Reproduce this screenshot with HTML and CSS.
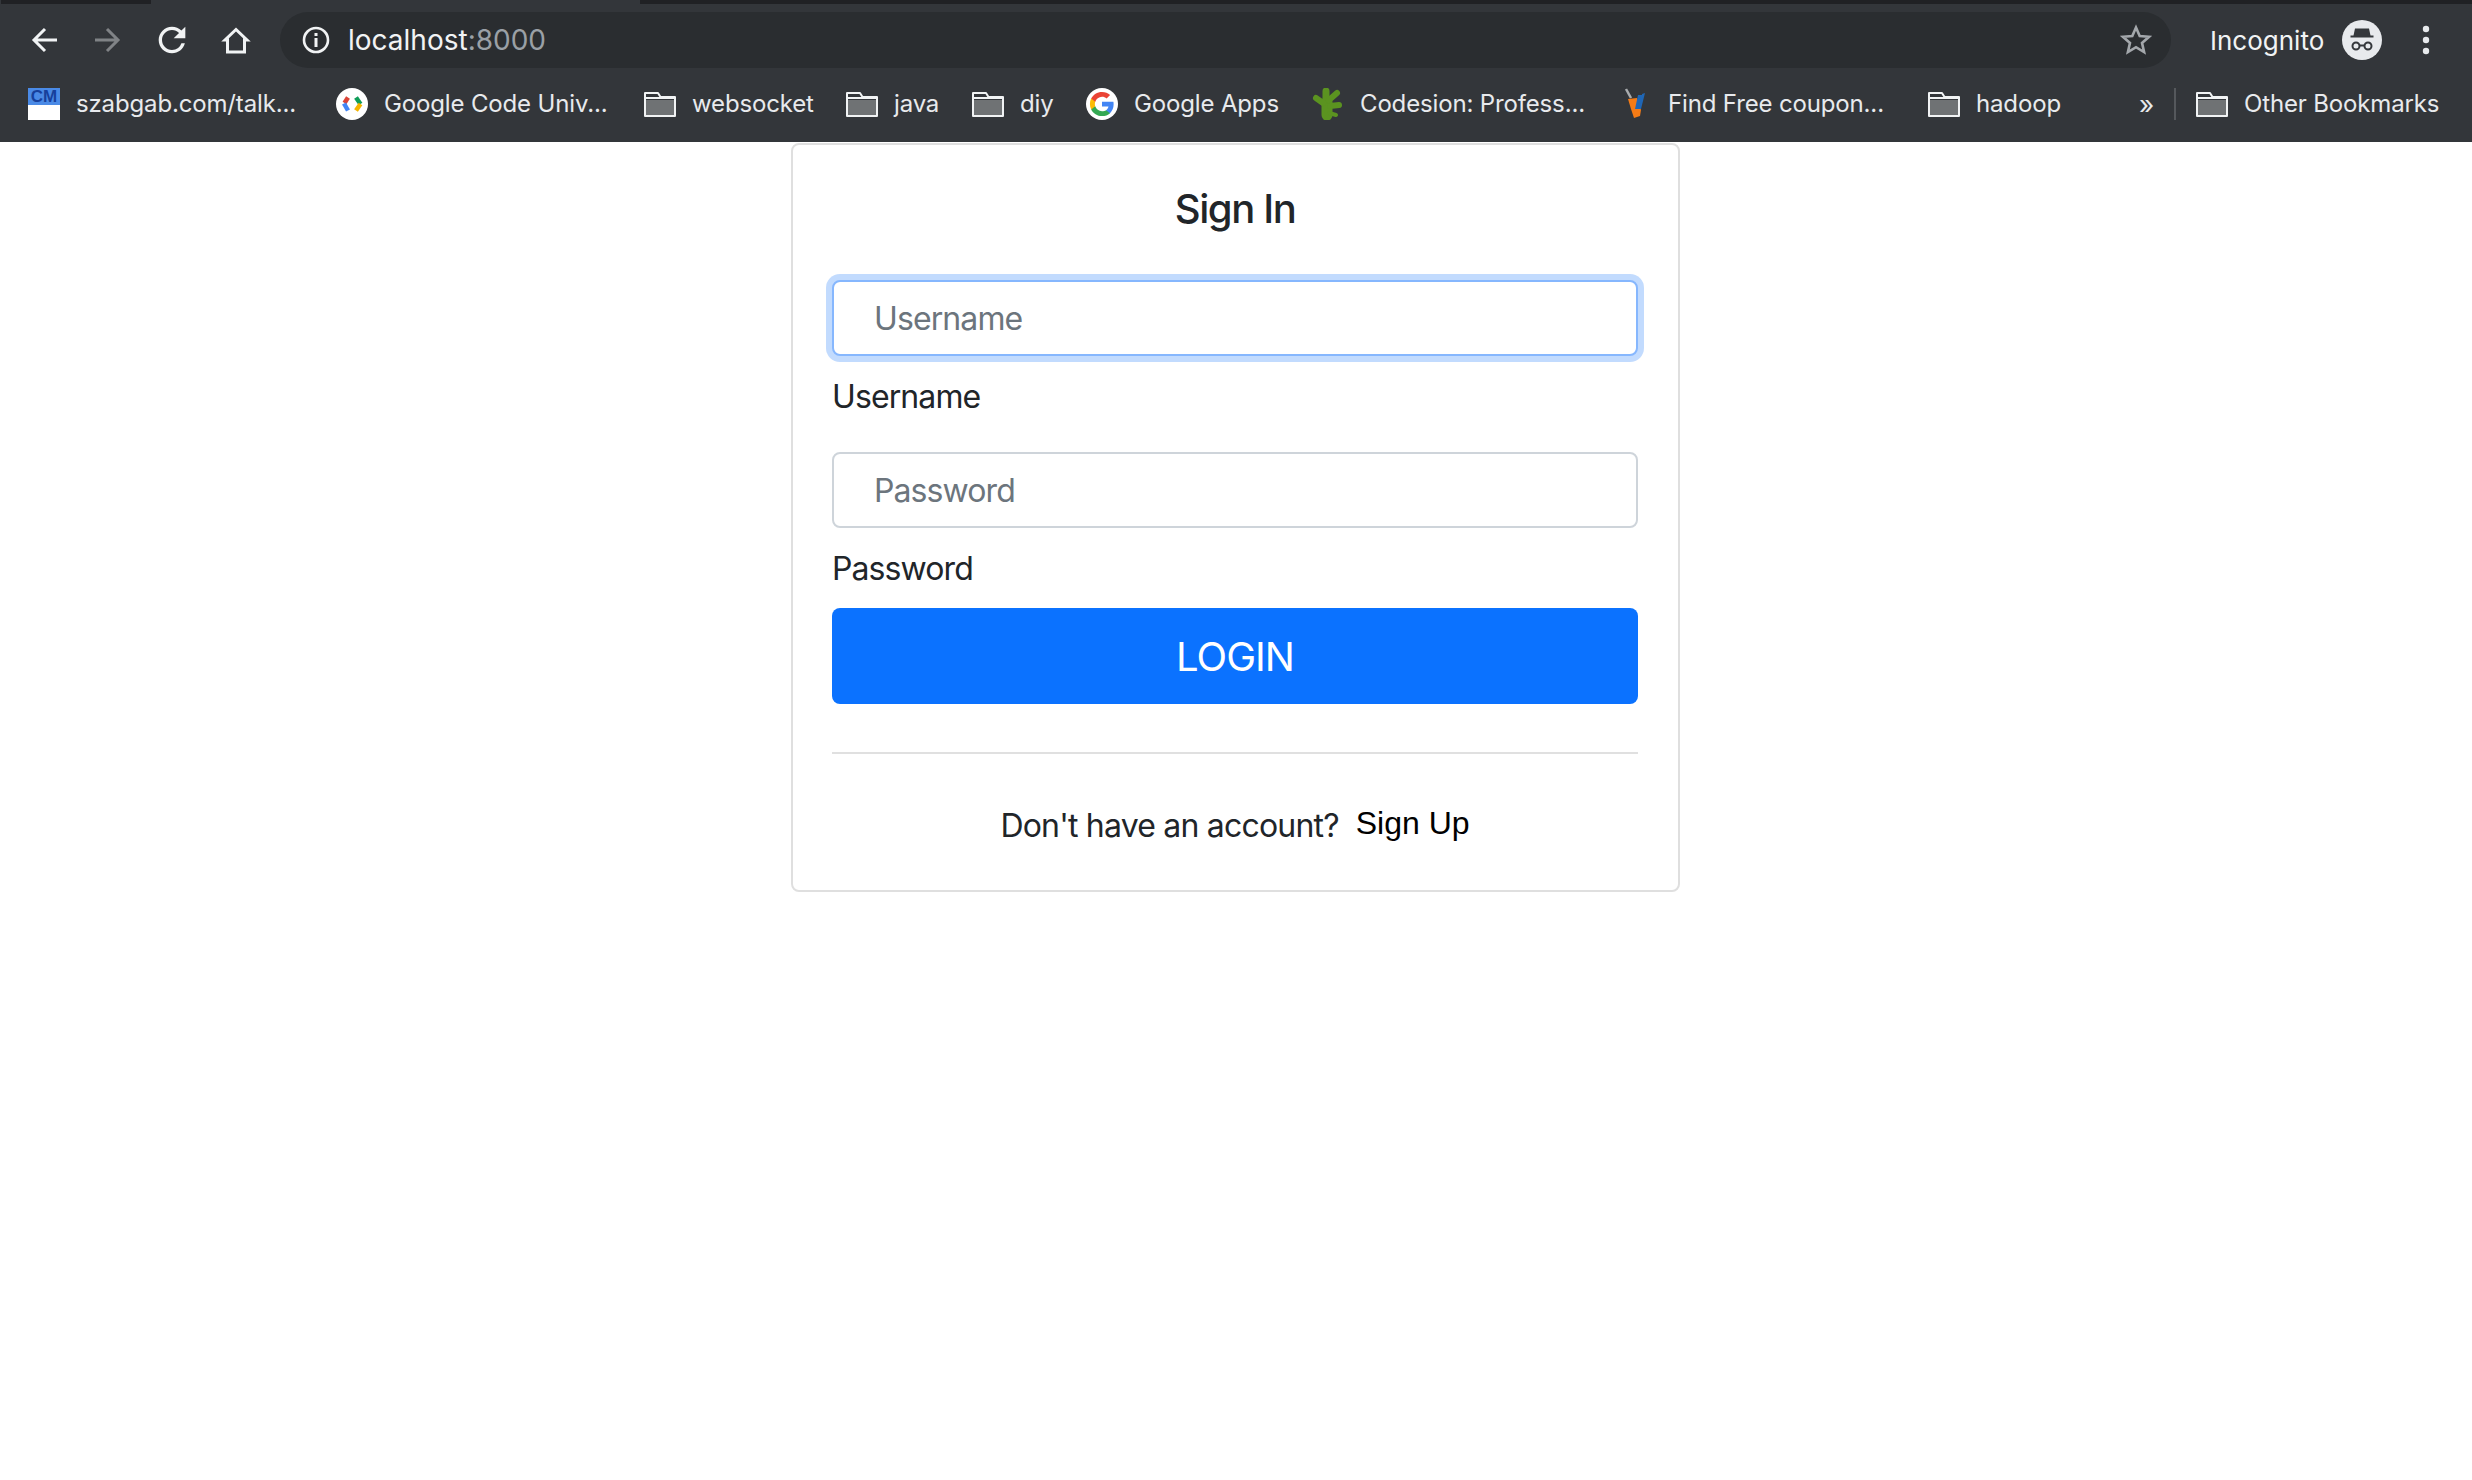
FILE: index.html
```html
<!DOCTYPE html>
<html lang="en">
<head>
    <meta charset="UTF-8">
    <meta name="viewport" content="width=device-width, initial-scale=1.0">
    <title>Sign In</title>
    <link rel="stylesheet" href="styles.css">
</head>
<body>

    <svg class="defs" width="0" height="0">
        <symbol id="folder" viewBox="0 0 32 26">
            <path d="M2 9h28v15H2z" fill="#6f7274"/>
            <path d="M1 24V2h13l2.500 4H31v19H1zM1 7h30" fill="none" stroke="#f1f3f4" stroke-width="2" stroke-linejoin="round"/>
        </symbol>
    </svg>

    <!--barra del navegador-->
    <header class="chrome">
        <div class="tabstrip">
            <span class="tab-dark tab-left"></span>
            <span class="tab-gap"></span>
            <span class="tab-dark tab-right"></span>
        </div>

        <div class="toolbar">
            <span class="navbtn">
                <svg width="32" height="32" viewBox="0 0 32 32" fill="none" stroke="#f1f3f4" stroke-width="3"><path d="M29 16H6M17 5L6 16l11 11"/></svg>
            </span>
            <span class="navbtn">
                <svg width="32" height="32" viewBox="0 0 32 32" fill="none" stroke="#808386" stroke-width="3"><path d="M3 16h23M15 5l11 11-11 11"/></svg>
            </span>
            <span class="navbtn">
                <svg width="40" height="40" viewBox="0 0 24 24" fill="#f1f3f4"><path d="M17.650 6.350A7.958 7.958 0 0012 4c-4.420 0-7.990 3.580-7.990 8s3.570 8 7.990 8c3.730 0 6.840-2.550 7.730-6h-2.080A5.990 5.990 0 0112 18c-3.310 0-6-2.690-6-6s2.690-6 6-6c1.660 0 3.140.690 4.220 1.780L13 11h7V4l-2.350 2.350z"/></svg>
            </span>
            <span class="navbtn">
                <svg width="32" height="32" viewBox="0 0 32 32" fill="none" stroke="#f1f3f4" stroke-width="3"><path d="M16 5.500L5 16h2.500v12h17V16H27z"/></svg>
            </span>

            <div class="omnibox">
                <svg class="info" width="30" height="30" viewBox="0 0 30 30">
                    <circle cx="15" cy="15" r="12" fill="none" stroke="#f1f3f4" stroke-width="2.600"/>
                    <path d="M13.500 13h3v9h-3zM13.500 8h3v3h-3z" fill="#f1f3f4"/>
                </svg>
                <span class="url">localhost<span class="port">:8000</span></span>
                <svg class="star" width="32" height="32" viewBox="0 0 32 32"><path d="M16 3.500l3.700 8.500 9.300.800-7 6.100 2.100 9.100-8.100-4.800-8.100 4.800 2.100-9.100-7-6.100 9.300-.800z" fill="none" stroke="#a3a7ab" stroke-width="2.600"/></svg>
            </div>

            <span class="incognito-text">Incognito</span>
            <svg class="incognito-icon" width="40" height="40" viewBox="0 0 40 40">
                <circle cx="20" cy="20" r="20" fill="#e8eaed"/>
                <path d="M13 8.500h14l1.500 7h3v2h-23v-2h3z" fill="#35383c"/>
                <circle cx="14" cy="26" r="3.500" fill="none" stroke="#35383c" stroke-width="2"/>
                <circle cx="26" cy="26" r="3.500" fill="none" stroke="#35383c" stroke-width="2"/>
                <path d="M17.500 25.500h5" stroke="#35383c" stroke-width="2"/>
            </svg>
            <svg class="menu" width="8" height="32" viewBox="0 0 8 32" fill="#e8eaed">
                <circle cx="4" cy="5" r="3.200"/><circle cx="4" cy="16" r="3.200"/><circle cx="4" cy="27" r="3.200"/>
            </svg>
        </div>

        <nav class="bookmarks">
            <a class="bm bm-talk">
                <svg width="32" height="32" viewBox="0 0 32 32">
                    <rect width="32" height="32" fill="#fff"/>
                    <rect width="32" height="17" fill="#4a8ae6"/>
                    <text x="16" y="14" class="favtext">CM</text>
                </svg>
                <span>szabgab.com/talk...</span>
            </a>
            <a class="bm bm-code">
                <svg width="32" height="32" viewBox="0 0 32 32" fill="none" stroke-width="4.500">
                    <circle cx="16" cy="16" r="16" fill="#fff"/>
                    <path d="M12 9.500l-3.500 5.500" stroke="#db4437"/>
                    <path d="M8 15.500l4 7" stroke="#4285f4"/>
                    <path d="M20 9.500l4.500 6.500" stroke="#0f9d58"/>
                    <path d="M24.500 16L20 22.500" stroke="#f4b400"/>
                </svg>
                <span>Google Code Univ...</span>
            </a>
            <a class="bm bm-websocket"><svg class="folder" width="32" height="26"><use href="#folder"/></svg><span>websocket</span></a>
            <a class="bm bm-java"><svg class="folder" width="32" height="26"><use href="#folder"/></svg><span>java</span></a>
            <a class="bm bm-diy"><svg class="folder" width="32" height="26"><use href="#folder"/></svg><span>diy</span></a>
            <a class="bm bm-apps">
                <svg width="32" height="32" viewBox="0 0 32 32">
                    <circle cx="16" cy="16" r="16" fill="#fff"/>
                    <g transform="translate(2.800 2.800) scale(.55)">
                        <path fill="#4285f4" d="M45.120 24.500c0-1.560-.140-3.060-.400-4.500H24v8.510h11.840c-.510 2.750-2.060 5.080-4.390 6.640v5.520h7.110c4.160-3.830 6.560-9.470 6.560-15.670z"/>
                        <path fill="#34a853" d="M24 46c5.940 0 10.920-1.970 14.560-5.330l-7.110-5.520c-1.970 1.320-4.490 2.100-7.450 2.100-5.730 0-10.580-3.870-12.310-9.070H4.340v5.700C7.960 41.070 15.400 46 24 46z"/>
                        <path fill="#fbbc05" d="M11.690 28.180C11.250 26.860 11 25.450 11 24s.250-2.860.690-4.180v-5.700H4.340C2.850 17.090 2 20.450 2 24c0 3.550.850 6.910 2.340 9.880l7.350-5.700z"/>
                        <path fill="#ea4335" d="M24 10.750c3.230 0 6.130 1.110 8.410 3.290l6.310-6.310C34.910 4.180 29.930 2 24 2 15.400 2 7.960 6.930 4.340 14.120l7.350 5.700c1.730-5.200 6.580-9.070 12.310-9.070z"/>
                    </g>
                </svg>
                <span>Google Apps</span>
            </a>
            <a class="bm bm-codesion">
                <svg width="32" height="32" viewBox="0 0 32 32" fill="none" stroke="#5b9320" stroke-linecap="round">
                    <path d="M15 27V14" stroke-width="11"/>
                    <path d="M14 12V3" stroke-width="7"/>
                    <path d="M11 15L4 10" stroke-width="6"/>
                    <path d="M17 12l8-7" stroke-width="6"/>
                    <path d="M18 18l9-1" stroke-width="6"/>
                    <path d="M17 25l7 2" stroke-width="4"/>
                </svg>
                <span>Codesion: Profess...</span>
            </a>
            <a class="bm bm-coupon">
                <svg width="32" height="32" viewBox="0 0 32 32">
                    <path d="M6 1l5 9" stroke="#a9acae" stroke-width="2.500"/>
                    <path d="M8 11l9-1 4 12-1 6-6 2-3-9z" fill="#f47b16"/>
                    <path d="M15 21l3-14h4v-1l3-1-2 8-2 8z" fill="#1f66b5"/>
                </svg>
                <span>Find Free coupon...</span>
            </a>
            <a class="bm bm-hadoop"><svg class="folder" width="32" height="26"><use href="#folder"/></svg><span>hadoop</span></a>
            <span class="more">»</span>
            <span class="bm-sep"></span>
            <a class="bm"><svg class="folder" width="32" height="26"><use href="#folder"/></svg><span>Other Bookmarks</span></a>
        </nav>
    </header>

    <!--formulario-->
    <div class="page">
        <main class="card">
            <h1 class="card-title">Sign In</h1>
            <form>
                <input class="field field-focus" type="text" placeholder="Username">
                <label class="field-label label-first">Username</label>
                <input class="field" type="password" placeholder="Password">
                <label class="field-label label-last">Password</label>
                <button class="btn-login" type="button">LOGIN</button>
            </form>
            <hr class="divider">
            <p class="signup">Don't have an account?<a class="signup-link">Sign Up</a></p>
        </main>
    </div>

</body>
</html>
```

FILE: styles.css
```css
body {
    margin: 0;
    background: #fff;
    font-family: Inter, "Noto Sans", sans-serif;
    color: #212529;
}

.defs {
    display: block;
    height: 0;
}

/* barra del navegador */
.chrome {
    height: 142px;
    background: #33363a;
    color: #f1f3f4;
    overflow: hidden;
}

.tabstrip {
    display: flex;
    height: 4px;
}
.tab-dark {
    background: #202124;
}
.tab-left {
    width: 150px;
    margin-left: 1px;
}
.tab-gap {
    width: 489px;
}
.tab-right {
    flex: 1;
}

.toolbar {
    display: flex;
    align-items: center;
    height: 72px;
    padding-left: 12px;
}
.navbtn {
    display: flex;
    align-items: center;
    justify-content: center;
    width: 64px;
}

.omnibox {
    display: flex;
    align-items: center;
    width: 1891px;
    height: 56px;
    margin-left: 12px;
    padding-left: 21px;
    box-sizing: border-box;
    border-radius: 28px;
    background: #2a2d30;
}
.url {
    margin-left: 17px;
    font-size: 28px;
}
.port {
    color: #9aa0a6;
}
.star {
    margin-left: auto;
    margin-right: 19px;
}

.incognito-text {
    margin-left: 39px;
    font-size: 26px;
}
.incognito-icon {
    margin-left: 18px;
}
.menu {
    margin-left: 40px;
}

.bookmarks {
    display: flex;
    align-items: center;
    height: 32px;
    padding: 12px 0 22px 28px;
    font-size: 24px;
    letter-spacing: -.15px;
    color: #e8eaed;
}
.bm {
    display: flex;
    align-items: center;
    gap: 16px;
    flex: none;
}
.bm span {
    padding-bottom: 2px;
}
.favtext {
    font: bold 17px "Liberation Sans", sans-serif;
    letter-spacing: 0;
    text-anchor: middle;
    fill: #17409c;
}
.bm-talk { width: 308px; }
.bm-code { width: 308px; }
.bm-websocket { width: 202px; }
.bm-java { width: 126px; }
.bm-diy { width: 114px; }
.bm-apps { width: 226px; }
.bm-codesion { width: 308px; }
.bm-coupon { width: 308px; }
.bm-hadoop { width: 211px; }
.more {
    font-size: 26px;
    width: 35px;
}
.bm-sep {
    width: 2px;
    height: 32px;
    margin-right: 20px;
    background: #55585c;
}

/* formulario */
.page {
    display: flex;
    justify-content: center;
    padding-right: 1px;
}
.card {
    width: 889px;
    height: 749px;
    margin-top: 1px;
    padding: 0 40px 0 39px;
    box-sizing: border-box;
    border: 2px solid #dfdfdf;
    border-radius: 8px;
}
.card-title {
    margin: 0;
    padding-top: 40px;
    height: 135px;
    box-sizing: border-box;
    font-size: 40px;
    line-height: 48px;
    font-weight: 500;
    letter-spacing: -1.4px;
    text-align: center;
}

.field {
    display: block;
    width: 100%;
    height: 76px;
    padding: 0 40px;
    box-sizing: border-box;
    border: 2px solid #ced4da;
    border-radius: 8px;
    outline: none;
    font-family: inherit;
    font-size: 32px;
    letter-spacing: -.9px;
    color: #212529;
}
.field::placeholder {
    color: #6c757d;
    opacity: 1;
}
.field-focus {
    border-color: #86b7fe;
    box-shadow: 0 0 0 6px rgba(13, 110, 253, .25);
}

.field-label {
    display: block;
    font-size: 32px;
    line-height: 48px;
    letter-spacing: -.9px;
}
.label-first {
    margin: 17px 0 31px;
}
.label-last {
    margin: 17px 0 15px;
}

.btn-login {
    display: block;
    width: 100%;
    height: 96px;
    border: 0;
    border-radius: 8px;
    background: #0b72ff;
    color: #fff;
    font-family: inherit;
    font-size: 40px;
    letter-spacing: -1px;
}

.divider {
    height: 2px;
    margin: 48px 0 0;
    border: 0;
    background: #e0e0e0;
}

.signup {
    margin: 48px 0 0;
    font-size: 32px;
    line-height: 48px;
    letter-spacing: -.8px;
    text-align: center;
}
.signup-link {
    display: inline-block;
    margin-left: 17px;
    line-height: 32px;
    vertical-align: 3px;
    font-family: "Liberation Sans", sans-serif;
    letter-spacing: 0;
    color: #000;
}
```
